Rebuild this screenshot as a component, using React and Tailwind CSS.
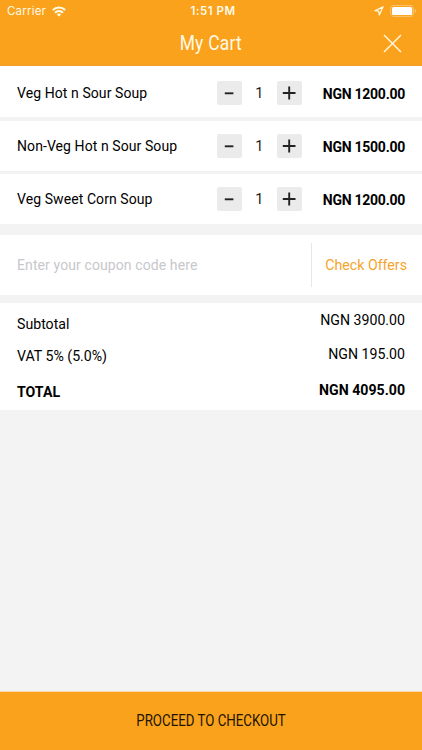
const items = [
  { name: 'Veg Hot n Sour Soup', price: 'NGN 1200.00' },
  { name: 'Non-Veg Hot n Sour Soup', price: 'NGN 1500.00' },
  { name: 'Veg Sweet Corn Soup', price: 'NGN 1200.00' },
];

function StepButton({ plus }) {
  return (
    <button className="w-[24.5px] h-6 rounded-[2px] bg-[#ebebeb] flex items-center justify-center" aria-label={plus ? 'Increase' : 'Decrease'}>
      <svg width="24" height="24" viewBox="0 0 24 24" stroke="#222" strokeWidth="1.9" fill="none">
        {plus ? <path d="M5.8 12H18.5M12.2 5.6V18.4" /> : <path d="M7.8 12.3H16.4" />}
      </svg>
    </button>
  );
}

function CartRow({ item }) {
  return (
    <div className="h-[50px] shrink-0 bg-white flex items-center pl-[17px] pr-[17px] first:h-[51px] first:pt-[2px]">
      <div className="w-[200px] text-[14px] tracking-[0.08px] whitespace-nowrap">{item.name}</div>
      <div className="flex items-center w-[84.5px] justify-between">
        <StepButton />
        <span className="text-[14.5px] text-[#1c1c1c] pt-[2px]">1</span>
        <StepButton plus />
      </div>
      <div className="flex-1 text-right font-bold text-[14px] tracking-[-0.26px] whitespace-nowrap pt-[2px]">{item.price}</div>
    </div>
  );
}

export default function App() {
  return (
    <div className="w-[422px] h-[750px] bg-[#f3f3f3] flex flex-col overflow-hidden font-['Roboto',sans-serif] text-black leading-5">
      <header className="h-[66px] shrink-0 bg-[#faa21b] text-[#fffae8] border-b border-[#efa02d]">
        <div className="h-[22px] grid grid-cols-3 items-center pl-[7px] pr-[5px] font-['Inter',sans-serif] text-[11.5px]">
          <div className="flex items-center gap-[6px]">
            <span className="tracking-[0.2px]">Carrier</span>
            <svg width="14" height="11" viewBox="0 0 14 11" fill="none" stroke="currentColor" strokeWidth="2.1">
              <path d="M.8 4C4.4.6 9.6.6 13.2 4" />
              <path d="M3 6.7C5.3 4.6 8.7 4.6 11 6.7" />
              <path d="M7 10.5 4.8 8.5C6 7.3 8 7.3 9.2 8.5Z" fill="currentColor" stroke="none" />
            </svg>
          </div>
          <div className="text-center font-semibold tracking-[0.5px] pl-[2px]">1:51 PM</div>
          <div className="flex items-center justify-end gap-[6px]">
            <svg width="10" height="10" viewBox="0 0 10 10" fill="none" stroke="currentColor" strokeWidth="1.2" strokeLinejoin="round">
              <path d="M9 .9 .9 4.7 4.8 5.2 5.3 9Z" />
            </svg>
            <svg width="27" height="12" viewBox="0 0 27 12">
              <rect x=".6" y=".6" width="23" height="10.8" rx="2.8" fill="none" stroke="#fcc570" />
              <rect x="2" y="2" width="20.2" height="8" rx="1.5" fill="#fff" />
              <path d="M25 4v4q1.3-.7 1.3-2T25 4Z" fill="#fcc570" />
            </svg>
          </div>
        </div>
        <div className="h-[42px] grid grid-cols-[1fr_auto_1fr] items-center">
          <span />
          <h1 className="text-[20px] origin-center scale-x-[.87] tracking-[0.3px]">My Cart</h1>
          <svg className="justify-self-end mr-5" width="19" height="19" viewBox="0 0 19 19" stroke="currentColor" strokeWidth="1.4">
            <path d="M1 1 18 18M18 1 1 18" />
          </svg>
        </div>
      </header>

      <main className="flex-1 flex flex-col">
        <section className="flex flex-col gap-[3.5px]">
          {items.map((item, i) => <CartRow key={i} item={item} />)}
        </section>

        <section className="mt-[11px] h-[60px] bg-white flex items-center pl-[17px] pr-[15px]">
          <div className="flex-1 text-[14px] tracking-[0.1px] text-[#c7c7cc]">Enter your coupon code here</div>
          <div className="h-11 w-px bg-[#e8e8e8]" />
          <div className="w-[95px] text-right text-[14.2px] text-[#f5a42c] whitespace-nowrap">Check Offers</div>
        </section>

        <section className="mt-2 h-[107px] bg-white flex justify-between pl-[17px] pr-[17px] text-[14.15px]">
          <div className="flex flex-col pt-[11px]">
            <span>Subtotal</span>
            <span className="mt-3">VAT 5% (5.0%)</span>
            <span className="mt-4 font-bold">TOTAL</span>
          </div>
          <div className="flex flex-col items-end pt-[7px]">
            <span>NGN 3900.00</span>
            <span className="mt-[14px]">NGN 195.00</span>
            <span className="mt-4 font-bold">NGN 4095.00</span>
          </div>
        </section>
      </main>

      <button className="h-[59px] shrink-0 bg-[#faa21b] border-t border-[#f6d8aa] flex items-center justify-center text-[#201400]">
        <span className="text-[16px] scale-x-[.83] whitespace-nowrap">PROCEED TO CHECKOUT</span>
      </button>
    </div>
  );
}
